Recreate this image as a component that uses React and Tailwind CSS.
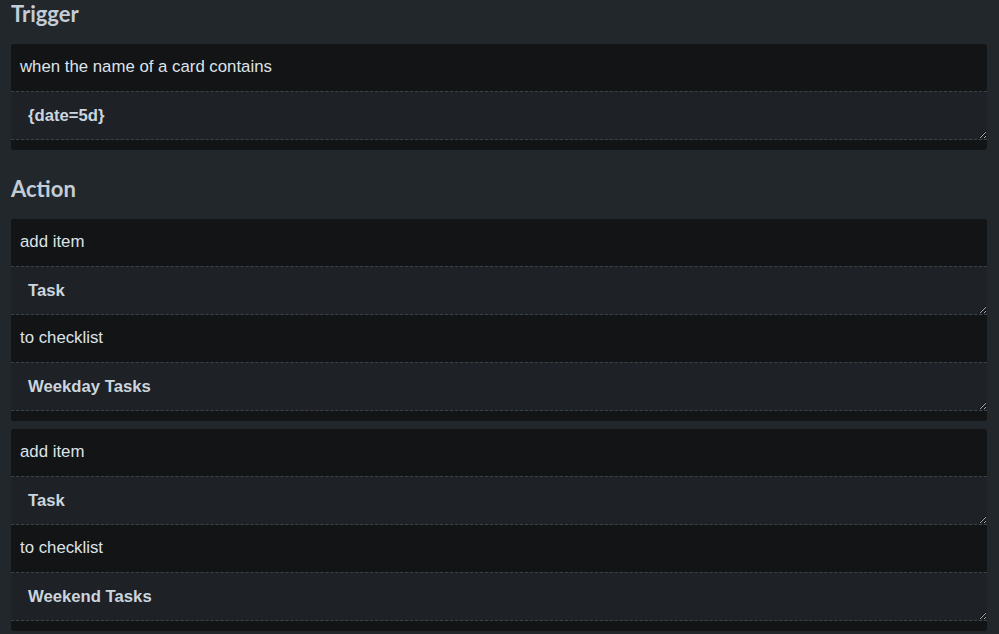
import React from 'react';

const rules = [
    {
        heading: 'Trigger',
        cards: [[
            { label: 'when the name of a card contains', value: '{date=5d}' },
        ]],
    },
    {
        heading: 'Action',
        cards: [
            [
                { label: 'add item', value: 'Task' },
                { label: 'to checklist', value: 'Weekday Tasks' },
            ],
            [
                { label: 'add item', value: 'Task' },
                { label: 'to checklist', value: 'Weekend Tasks' },
            ],
        ],
    },
];

const Field = ({ label, value }) => (
    <>
        <div className="h-[47px] flex items-center px-[9px] pb-[1px] text-[16.8px] text-[#dee3e8]">
            {label}
        </div>
        <textarea
            readOnly
            defaultValue={value}
            rows={1}
            className="block w-full h-[49px] box-border bg-[#1e2226] border-y border-dashed border-[#3b4249] pl-[17px] pr-2 pt-[11px] text-[16.7px] font-bold text-[#cbd5df] outline-none overflow-hidden resize-y [color-scheme:dark] font-['Liberation_Sans',Arial,sans-serif]"
        />
    </>
);

const App = () => {
    return (
        <div className="min-h-screen bg-[#22272b] pl-[11px] pr-[12px] font-['Liberation_Sans',Arial,sans-serif]">
            {rules.map((rule, i) => (
                <div key={rule.heading} className={i === 0 ? '' : 'mt-[25px]'}>
                    <h2 className="h-[28px] leading-[28px] text-[22px] font-bold text-[#c3cdd8] font-['Lato','Noto_Sans',sans-serif] mb-[16px]">
                        {rule.heading}
                    </h2>
                    <div className="flex flex-col gap-[8px]">
                        {rule.cards.map((fields, j) => (
                            <div key={j} className="bg-[#121416] rounded-[3px] pb-[10px] overflow-hidden">
                                {fields.map((f, k) => (
                                    <Field key={k} label={f.label} value={f.value} />
                                ))}
                            </div>
                        ))}
                    </div>
                </div>
            ))}
        </div>
    );
};

export default App;
